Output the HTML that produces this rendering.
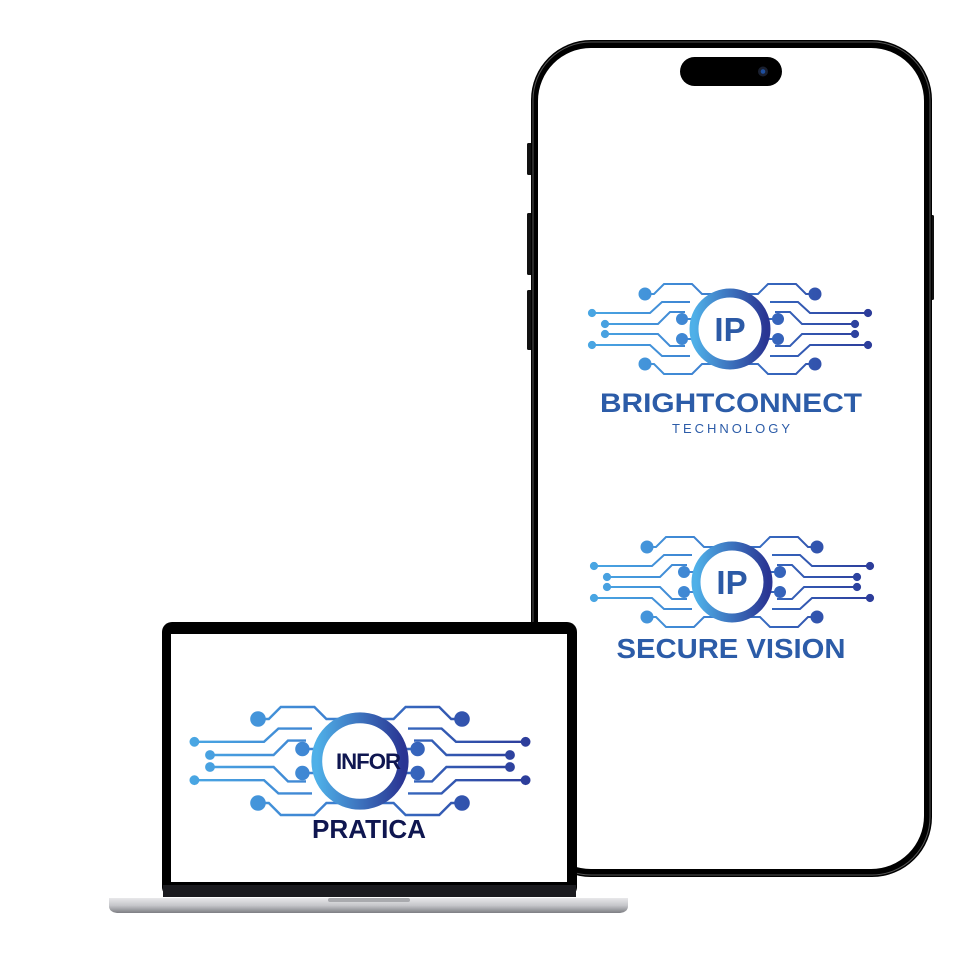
<!DOCTYPE html>
<html><head><meta charset="utf-8"><style>
html,body{margin:0;padding:0;background:#fff;width:960px;height:960px;overflow:hidden}
svg{display:block}
text{font-family:"Liberation Sans",sans-serif;font-weight:bold}
</style></head><body>
<svg width="960" height="960" viewBox="0 0 960 960" xmlns="http://www.w3.org/2000/svg">
<defs>
  <linearGradient id="rg" x1="0" x2="1" y1="0" y2="0">
    <stop offset="0" stop-color="#4fb0e8"/><stop offset="1" stop-color="#2a3593"/>
  </linearGradient>
  <linearGradient id="tg" gradientUnits="userSpaceOnUse" x1="-146" x2="146" y1="0" y2="0">
    <stop offset="0" stop-color="#4aa8e4"/><stop offset="0.5" stop-color="#3a78cc"/><stop offset="1" stop-color="#2c3a98"/>
  </linearGradient>
  <g id="q">
    <circle cx="-85" cy="-35" r="6"/>
    <path d="M-85,-35 H-76 L-66,-45 H-38 L-28,-35 H0" fill="none" stroke-width="2"/>
    <circle cx="-138" cy="-16" r="3.6"/>
    <path d="M-138,-16 H-80 L-68,-27 H-40" fill="none" stroke-width="2"/>
    <circle cx="-125" cy="-5" r="3.6"/>
    <path d="M-125,-5 H-72 L-60,-17 H-45" fill="none" stroke-width="2"/>
    <circle cx="-48" cy="-10" r="5.5"/>
    <path d="M-48,-10 H0" fill="none" stroke-width="2"/>
  </g>
  <mask id="m" maskUnits="userSpaceOnUse" x="-150" y="-60" width="300" height="120">
    <g fill="#fff" stroke="#fff">
      <use href="#q"/>
      <use href="#q" transform="scale(1,-1)"/>
      <use href="#q" transform="scale(-1,1)"/>
      <use href="#q" transform="scale(-1,-1)"/>
    </g>
  </mask>
  <g id="logo">
    <rect x="-150" y="-60" width="300" height="120" fill="url(#tg)" mask="url(#m)"/>
    <circle cx="0" cy="0" r="36" fill="#fff" stroke="url(#rg)" stroke-width="9"/>
  </g>
</defs>

<!-- Phone -->
<rect x="527" y="143" width="6" height="32" rx="1.5" fill="#111"/>
<rect x="527" y="213" width="6" height="62" rx="1.5" fill="#111"/>
<rect x="527" y="290" width="6" height="60" rx="1.5" fill="#111"/>
<rect x="929" y="215" width="5" height="85" rx="1.5" fill="#111"/>
<rect x="531" y="40" width="401" height="837" rx="60" fill="#000"/>
<rect x="533" y="42" width="397" height="833" rx="58" fill="none" stroke="#555" stroke-width="1"/>
<rect x="538" y="48" width="386" height="821" rx="53" fill="#fff"/>
<rect x="680" y="57" width="102" height="29" rx="14.5" fill="#000"/>
<circle cx="763" cy="71.5" r="5" fill="#1a2030"/><circle cx="763" cy="71.5" r="2.3" fill="#1d4fa0"/>

<g transform="translate(730,329)"><use href="#logo"/>
  <text x="0" y="12" text-anchor="middle" font-size="33" fill="#2c5aa6">IP</text></g>
<text x="731" y="412" text-anchor="middle" font-size="27" textLength="262" lengthAdjust="spacingAndGlyphs" fill="#2c5ca8">BRIGHTCONNECT</text>
<text x="731" y="433" text-anchor="middle" font-size="13" font-weight="normal" textLength="118" lengthAdjust="spacing" fill="#2c5ca8" style="font-weight:normal">TECHNOLOGY</text>

<g transform="translate(732,582)"><use href="#logo"/>
  <text x="0" y="12" text-anchor="middle" font-size="33" fill="#2c5aa6">IP</text></g>
<text x="731" y="658" text-anchor="middle" font-size="28" textLength="229" lengthAdjust="spacingAndGlyphs" fill="#2c5ca8">SECURE VISION</text>

<!-- Laptop -->
<rect x="162" y="622" width="415" height="275" rx="10" fill="#000"/>
<rect x="163" y="885" width="413" height="12" fill="#1b1b1f"/>
<rect x="171" y="634" width="396" height="248" fill="#fff"/>
<defs><linearGradient id="bg" x1="0" x2="0" y1="0" y2="1">
  <stop offset="0" stop-color="#e8e8ea"/><stop offset="0.5" stop-color="#c5c6ca"/><stop offset="1" stop-color="#7d7e83"/></linearGradient></defs>
<path d="M109,898 H628 V906 Q628,912 620,913 H117 Q109,912 109,906 Z" fill="url(#bg)"/>
<rect x="328" y="898" width="82" height="4" rx="2" fill="#a9aaae"/>

<g transform="translate(360,761) scale(1.2)"><use href="#logo"/></g>
<text x="368" y="769" text-anchor="middle" font-size="22" textLength="64" lengthAdjust="spacingAndGlyphs" fill="#0f1650" letter-spacing="-1">INFOR</text>
<text x="369" y="838" text-anchor="middle" font-size="26" textLength="114" lengthAdjust="spacingAndGlyphs" fill="#0f1650">PRATICA</text>
</svg>
</body></html>
